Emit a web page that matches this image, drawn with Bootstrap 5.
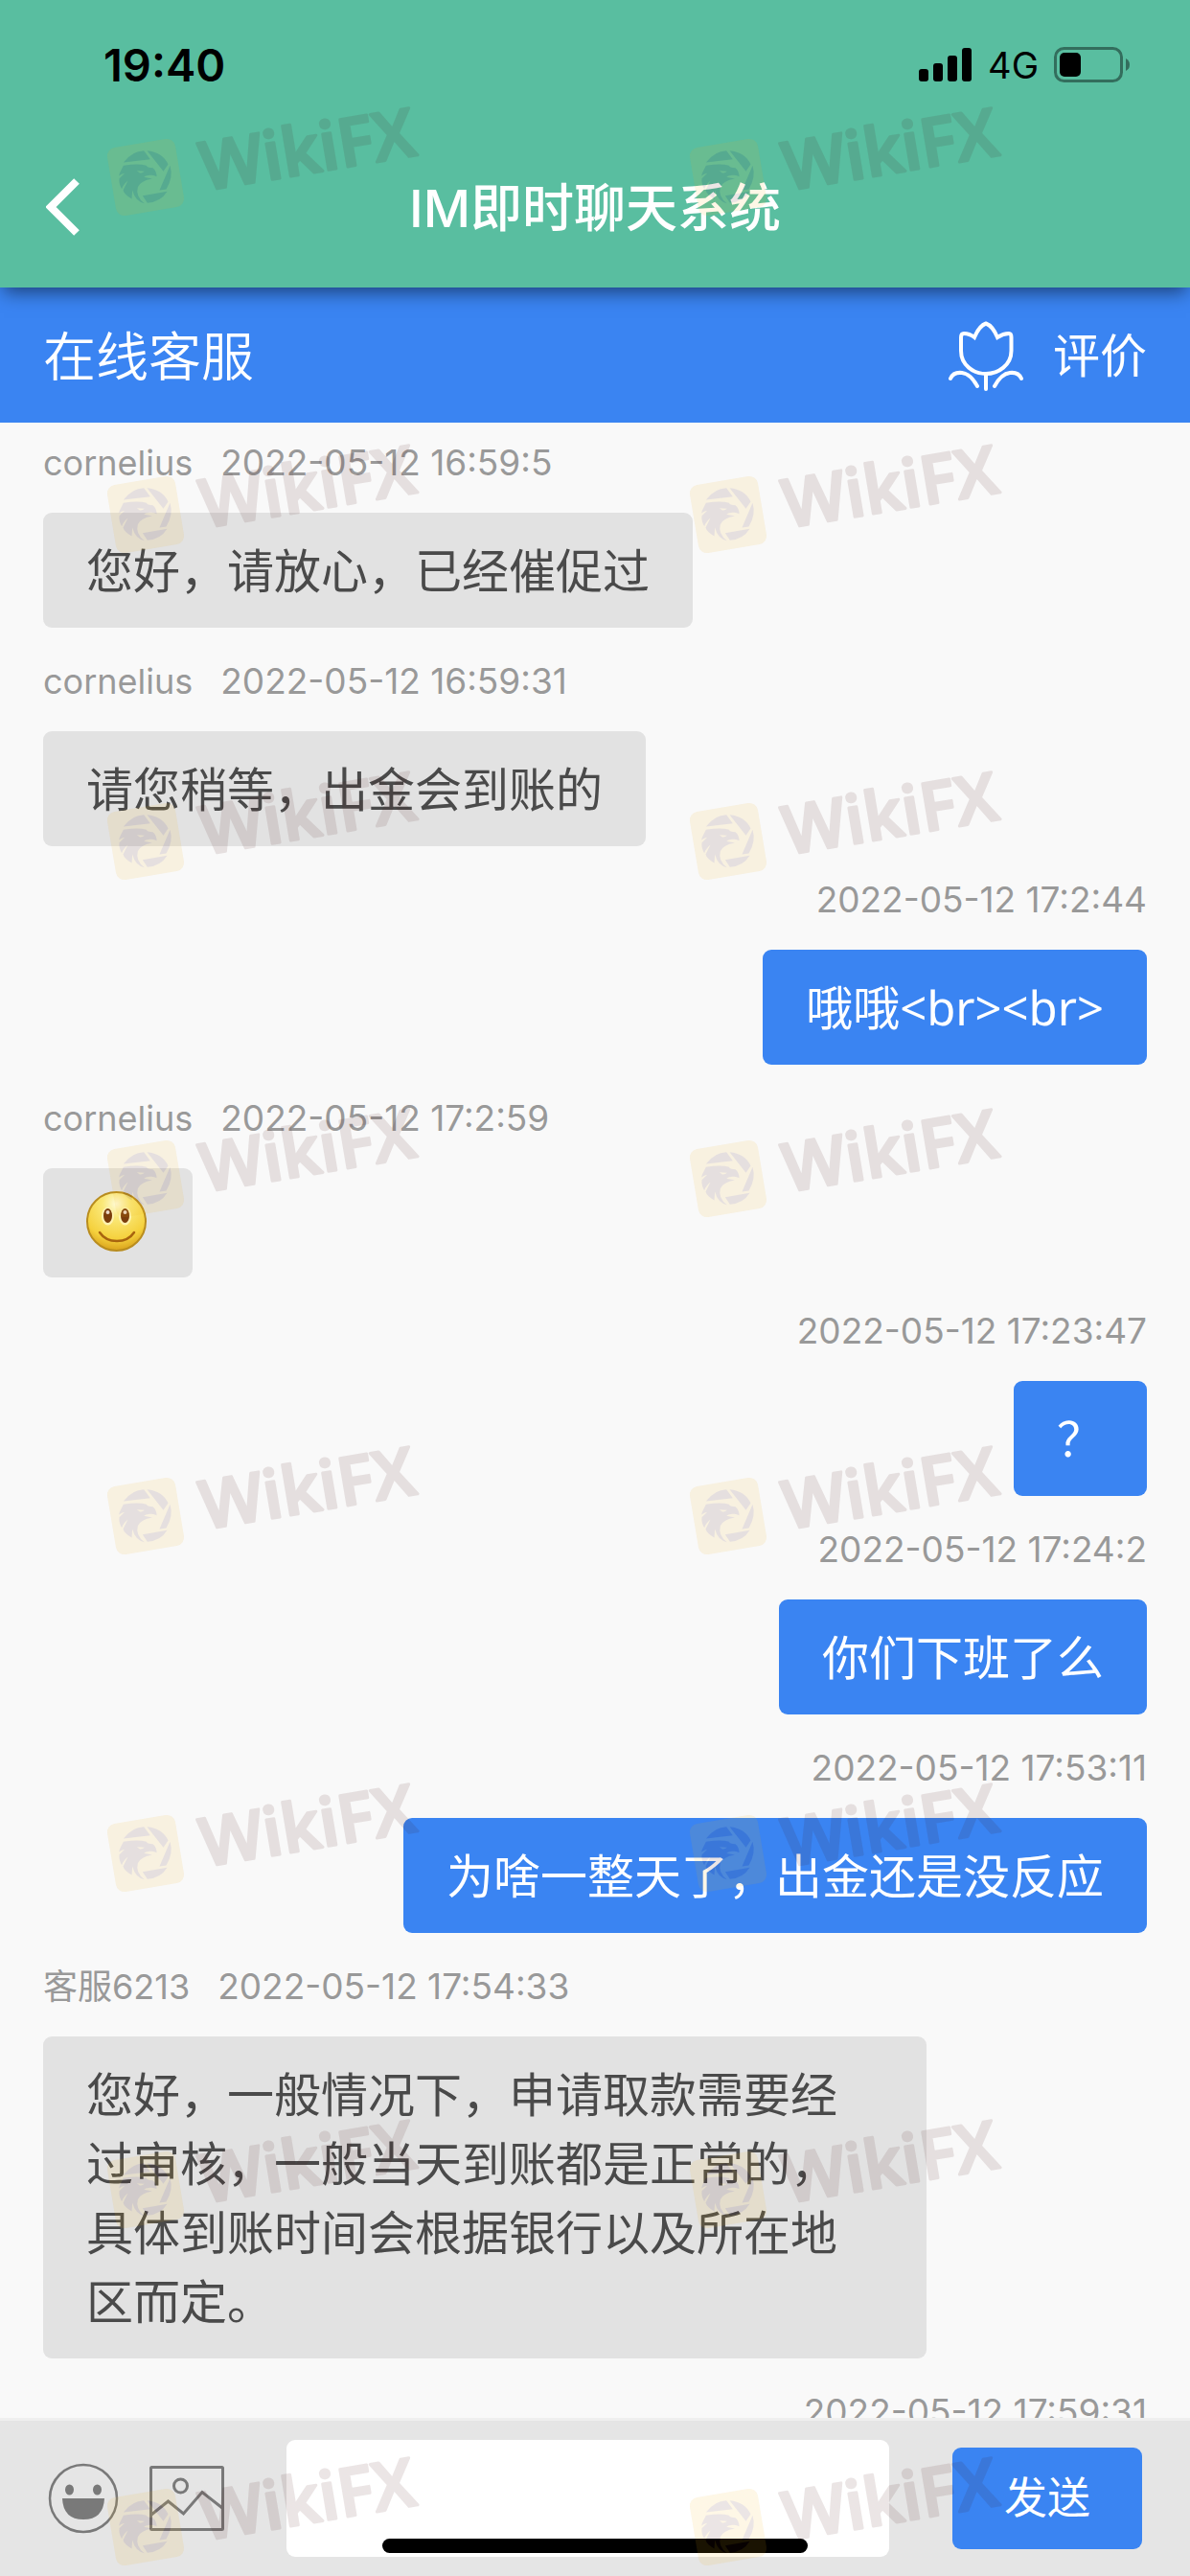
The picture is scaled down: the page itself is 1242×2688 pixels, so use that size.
<!DOCTYPE html>
<html lang="zh-CN">
<head>
<meta charset="utf-8">
<meta name="viewport" content="width=device-width, initial-scale=1">
<title>IM即时聊天系统</title>
<link href="https://cdn.jsdelivr.net/npm/bootstrap@5.3.0/dist/css/bootstrap.min.css" rel="stylesheet">
<style>
  :root { --im-green: #59bea0; --im-blue: #3a84f2; --im-grey: #e2e2e2; }
  body { font-family: Inter, "Noto Sans CJK SC", sans-serif; background: #f9f9f9; }
  svg { display: block; flex: none; }
  .app-shell { height: 100vh; }

  .app-header { background: var(--im-green); z-index: 2; box-shadow: 0 9px 18px -4px rgba(0, 0, 0, .5); }
  .status-bar { height: 136px; padding: 0 62px 0 108px; }
  .status-time { font-size: 47px; font-weight: 600; }
  .status-net { font-size: 38px; }
  .title-bar { height: 164px; padding: 0 48px; }
  .title-bar h1 { font-size: 54px; font-weight: 500; }
  .title-side { width: 36px; }

  .service-bar { background: var(--im-blue); height: 141px; padding: 2px 45px 0; }
  .service-bar h2 { font-size: 55px; font-weight: 350; }
  .rate-btn { font-size: 49px; gap: 30px; line-height: 72px; }

  .chat-log { padding: 14px 45px 0; gap: 28px; min-height: 0; }
  .msg { gap: 24px; flex: none; }
  .msg-meta { font-size: 36px; line-height: 56px; color: #999; gap: 29px; }
  .msg-meta time { font-size: 37px; }
  .bubble { font-family: "Noto Sans", "Noto Sans CJK SC", sans-serif; font-size: 49px; line-height: 72px; padding: 24px 45px; border-radius: 9px; max-width: 80%; background: var(--im-grey); color: #4a4a4a; overflow-wrap: anywhere; }
  .msg-out .bubble { background: var(--im-blue); color: #fff; }
  .bubble-face { padding: 24px 45px 27px; }

  .composer { background: #e5e5e5; border-top: 3px solid #efefef; padding: 20px 50px; }
  .tool-btns { gap: 32px; margin-right: 65px; }
  .composer input { flex: 1 1 0; min-width: 0; height: 122px; border-radius: 9px; font-size: 49px; }
  .send-btn { width: 198px; height: 106px; margin-left: 66px; border-radius: 9px; background: var(--im-blue); color: #fff; font-size: 45px; }
  .send-btn:hover { background: #2f76e0; color: #fff; }

  .home-line { bottom: 24px; width: 444px; height: 15px; border-radius: 8px; background: #000; z-index: 3; }
  .watermarks { z-index: 4; pointer-events: none; }
  .watermarks text { font-family: "Open Sans", sans-serif; font-weight: 600; font-size: 70px; stroke-linejoin: round; }
</style>
<script src="https://cdn.jsdelivr.net/npm/bootstrap@5.3.0/dist/js/bootstrap.bundle.min.js"></script>
</head>
<body>
<div class="app-shell position-relative d-flex flex-column overflow-hidden">

  <header class="app-header position-relative flex-shrink-0">
    <div class="status-bar d-flex align-items-center justify-content-between">
      <span class="status-time text-black">19:40</span>
      <div class="d-flex align-items-center">
        <svg class="me-3" width="56" height="36" viewBox="0 0 56 36" aria-hidden="true">
          <rect y="22" width="10" height="13" rx="3"/><rect x="15" y="16" width="10" height="19" rx="3"/><rect x="30" y="8" width="10" height="27" rx="3"/><rect x="45" width="10" height="35" rx="3"/>
        </svg>
        <span class="status-net text-black me-3">4G</span>
        <svg width="80" height="38" viewBox="0 0 80 38" aria-hidden="true">
          <rect x="1.5" y="1.5" width="69" height="34" rx="9" fill="none" stroke="#000" stroke-opacity=".42" stroke-width="3"/>
          <rect x="6" y="6" width="22" height="25" rx="5"/>
          <path d="M75 12 Q79 14 79 18.500 Q79 23 75 25Z" fill-opacity=".42"/>
        </svg>
      </div>
    </div>
    <div class="title-bar d-flex align-items-center justify-content-between text-white">
      <a class="title-side text-white" href="#" aria-label="返回">
        <svg width="36" height="64" viewBox="0 0 36 64"><path d="M32 3 L5 30 L32 57" fill="none" stroke="currentColor" stroke-width="8"/></svg>
      </a>
      <h1 class="m-0">IM即时聊天系统</h1>
      <span class="title-side"></span>
    </div>
  </header>

  <div class="service-bar flex-shrink-0 d-flex align-items-center justify-content-between text-white">
    <h2 class="m-0">在线客服</h2>
    <button class="rate-btn btn p-0 border-0 text-white d-flex align-items-center" type="button">
      <svg width="80" height="74" viewBox="0 0 80 74" fill="none" stroke="currentColor" stroke-width="4" stroke-linecap="round" aria-hidden="true">
        <path d="M28 17 Q33 5 40 2.500 Q47 5 52 17 Q58 13 64 13 Q66.500 13 66.500 17 V31 C66.500 46 53 55 40 55 C27 55 14 46 14 31 V17 Q14 13 17 13 Q23 13 28 17Z"/>
        <path d="M40 55 V71 M3 60 Q6 53 15 54 Q24 55 31 68 M77 60 Q74 53 65 54 Q56 55 49 68"/>
      </svg>
      <span>评价</span>
    </button>
  </div>

  <main class="chat-log flex-grow-1 d-flex flex-column overflow-hidden">
    <div class="msg d-flex flex-column align-items-start">
      <div class="msg-meta d-flex"><span>cornelius</span><time>2022-05-12 16:59:5</time></div>
      <div class="bubble">您好，请放心，已经催促过</div>
    </div>
    <div class="msg d-flex flex-column align-items-start">
      <div class="msg-meta d-flex"><span>cornelius</span><time>2022-05-12 16:59:31</time></div>
      <div class="bubble">请您稍等，出金会到账的</div>
    </div>
    <div class="msg msg-out d-flex flex-column align-items-end">
      <div class="msg-meta d-flex"><time>2022-05-12 17:2:44</time></div>
      <div class="bubble">哦哦&lt;br&gt;&lt;br&gt;</div>
    </div>
    <div class="msg d-flex flex-column align-items-start">
      <div class="msg-meta d-flex"><span>cornelius</span><time>2022-05-12 17:2:59</time></div>
      <div class="bubble bubble-face">
        <svg width="66" height="63" viewBox="0 0 66 63" role="img" aria-label="微笑">
          <defs>
            <radialGradient id="skin" cx=".5" cy=".2" r=".8"><stop offset="0" stop-color="#fffbd8"/><stop offset=".3" stop-color="#fae878"/><stop offset=".75" stop-color="#f5d13d"/><stop offset="1" stop-color="#d9a21c"/></radialGradient>
          </defs>
          <circle cx="31.500" cy="31.500" r="30.500" fill="url(#skin)" stroke="#b98d1f" stroke-width="2"/>
          <ellipse cx="22.500" cy="26" rx="6.500" ry="9.500" fill="#fff3b0"/><ellipse cx="40.500" cy="26" rx="6.500" ry="9.500" fill="#fff3b0"/>
          <ellipse cx="22.500" cy="25.500" rx="4.500" ry="7.500" fill="#7a3d0c"/><ellipse cx="40.500" cy="25.500" rx="4.500" ry="7.500" fill="#7a3d0c"/>
          <circle cx="22.500" cy="22" r="2" fill="#e8d7c8"/><circle cx="40.500" cy="22" r="2" fill="#e8d7c8"/>
          <path d="M14 43 Q20 52 32 52 Q44 52 50 43" fill="none" stroke="#a8640f" stroke-width="2.500" stroke-linecap="round"/>
        </svg>
      </div>
    </div>
    <div class="msg msg-out d-flex flex-column align-items-end">
      <div class="msg-meta d-flex"><time>2022-05-12 17:23:47</time></div>
      <div class="bubble">？</div>
    </div>
    <div class="msg msg-out d-flex flex-column align-items-end">
      <div class="msg-meta d-flex"><time>2022-05-12 17:24:2</time></div>
      <div class="bubble">你们下班了么</div>
    </div>
    <div class="msg msg-out d-flex flex-column align-items-end">
      <div class="msg-meta d-flex"><time>2022-05-12 17:53:11</time></div>
      <div class="bubble">为啥一整天了，出金还是没反应</div>
    </div>
    <div class="msg d-flex flex-column align-items-start">
      <div class="msg-meta d-flex"><span>客服6213</span><time>2022-05-12 17:54:33</time></div>
      <div class="bubble">您好，一般情况下，申请取款需要经过审核，一般当天到账都是正常的，具体到账时间会根据银行以及所在地区而定。</div>
    </div>
    <div class="msg msg-out d-flex flex-column align-items-end">
      <div class="msg-meta d-flex"><time>2022-05-12 17:59:31</time></div>
    </div>
  </main>

  <form class="composer flex-shrink-0 d-flex align-items-center" onsubmit="return false">
    <div class="tool-btns d-flex align-items-center">
      <button class="btn p-0 border-0" type="button" aria-label="表情">
        <svg width="74" height="74" viewBox="0 0 74 74"><circle cx="37" cy="37" r="35" fill="none" stroke="#797979" stroke-width="2.500"/><ellipse cx="22.500" cy="28" rx="4.500" ry="5.500" fill="#797979"/><ellipse cx="51.500" cy="28" rx="4.500" ry="5.500" fill="#797979"/><path d="M15 37 H59 Q58 59 37 59 Q16 59 15 37Z" fill="#797979"/></svg>
      </button>
      <button class="btn p-0 border-0" type="button" aria-label="图片">
        <svg width="78" height="68" viewBox="0 0 78 68" fill="none" stroke="#797979" stroke-width="3"><rect x="1.500" y="1.500" width="75" height="65" rx="1"/><circle cx="32.500" cy="21" r="7"/><path d="M2 51 L19.500 37 L35.500 50 L55 27.500 L76 44"/></svg>
      </button>
    </div>
    <input class="form-control border-0 bg-white" type="text" aria-label="输入消息">
    <button class="send-btn btn border-0 p-0 flex-shrink-0" type="submit">发送</button>
  </form>

  <div class="home-line position-absolute start-50 translate-middle-x"></div>

  <svg class="watermarks position-absolute top-0 start-0 w-100 h-100" aria-hidden="true">
    <defs>
      <g id="stamp">
        <rect x="-36" y="-36" width="72" height="72" rx="9" fill="#f0ae16" transform="rotate(-9.500)"/>
        <g transform="scale(.3333) translate(-187.500 -304.500)" fill="#460f0f">
          <path d="M118 258 Q145 222 182 221 L202 248 Z M192 221 Q240 225 258 264 L243 286 Z M264 268 Q275 305 252 342 L231 345 Z M178 362 L255 349 Q235 382 193 385 Z"/>
          <path d="M106 292 L118 268 Q165 260 190 268 Q192 275 210 275 Q222 285 222 302 Q213 296 200 298 Q186 300 182 304 L208 309 Q172 315 163 335 Q155 365 184 386 Q155 380 146 345 L144 372 Q120 358 117 345 L132 315 Q115 330 113 341 Q103 325 105 308 L122 292 Q112 294 104 300Z"/>
          <path d="M160 284 L184 286 Q175 294 168 290Z" fill="#f0ae16"/>
        </g>
        <text x="58" y="24" fill="#460f0f" stroke="#460f0f" stroke-width="3" transform="rotate(-9.500)">WikiFX</text>
      </g>
      <g id="stamps">
        <use href="#stamp" y="185"/><use href="#stamp" y="537"/><use href="#stamp" y="878"/><use href="#stamp" y="1230"/>
        <use href="#stamp" y="1582"/><use href="#stamp" y="1934"/><use href="#stamp" y="2285"/><use href="#stamp" y="2637"/>
      </g>
    </defs>
    <g opacity=".106"><use href="#stamps" x="152"/><use href="#stamps" x="760"/></g>
  </svg>
</div>
</body>
</html>
